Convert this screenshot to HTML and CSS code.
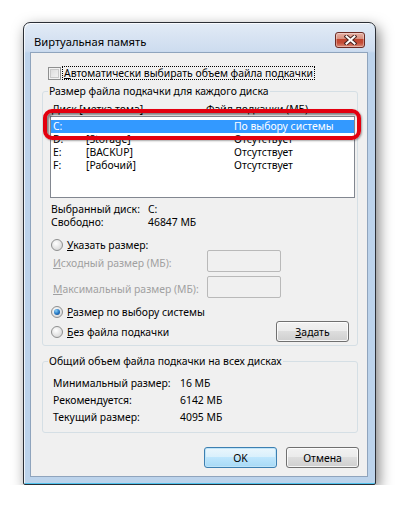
FILE: index.html
```html
<!DOCTYPE html>
<html lang="ru">
<head>
    <meta charset="UTF-8">
    <title>Виртуальная память</title>
    <link rel="stylesheet" href="styles.css">
</head>
<body>
    <div class="window">
        <div class="titlebar">
            <span class="title">Виртуальная память</span>
            <button class="close" title="Закрыть">
                <svg width="13" height="10" viewBox="0 0 13 10">
                    <path d="M2.5 1.5 L10.5 8.5 M10.5 1.5 L2.5 8.5" stroke="#4a2420" stroke-width="4" stroke-linecap="square"/>
                    <path d="M2.5 1.5 L10.5 8.5 M10.5 1.5 L2.5 8.5" stroke="#fff" stroke-width="2" stroke-linecap="square"/>
                </svg>
            </button>
        </div>

        <div class="client">
            <label class="auto">
                <span class="check"></span>
                <span class="focus"><u>А</u>втоматически выбирать объем файла подкачки</span>
            </label>

            <fieldset class="group">
                <legend>Размер файла подкачки для каждого диска</legend>
                <div class="cols">
                    <span>Диск [метка тома]</span>
                    <span>Файл подкачки (МБ)</span>
                </div>
                <div class="listbox">
                    <div class="row sel"><span>C:</span><span></span><span>По выбору системы</span></div>
                    <div class="row"><span>D:</span><span>[Storage]</span><span>Отсутствует</span></div>
                    <div class="row"><span>E:</span><span>[BACKUP]</span><span>Отсутствует</span></div>
                    <div class="row"><span>F:</span><span>[Рабочий]</span><span>Отсутствует</span></div>
                    <div class="callout"></div>
                </div>

                <div class="info">
                    <span>Выбранный диск:</span><span>C:</span>
                    <span>Свободно:</span><span>46847 МБ</span>
                </div>

                <div class="opt first"><span class="radio"></span><span><u>У</u>казать размер:</span></div>
                <div class="field f1">
                    <span class="muted"><u>И</u>сходный размер (МБ):</span>
                    <span class="input"></span>
                </div>
                <div class="field f2">
                    <span class="muted"><u>М</u>аксимальный размер (МБ):</span>
                    <span class="input"></span>
                </div>
                <div class="opt sys"><span class="radio on"></span><span><u>Р</u>азмер по выбору системы</span></div>
                <div class="opt last">
                    <span class="radio"></span><span><u>Б</u>ез файла подкачки</span>
                    <button class="btn set"><u>З</u>адать</button>
                </div>
            </fieldset>

            <fieldset class="group totals">
                <legend>Общий объем файла подкачки на всех дисках</legend>
                <div class="stats">
                    <span>Минимальный размер:</span><span>16 МБ</span>
                    <span>Рекомендуется:</span><span>6142 МБ</span>
                    <span>Текущий размер:</span><span>4095 МБ</span>
                </div>
            </fieldset>

            <div class="actions">
                <button class="btn default">OK</button>
                <button class="btn">Отмена</button>
            </div>
        </div>
    </div>
</body>
</html>
```

FILE: styles.css
```css
* {
    box-sizing: border-box;
}

body {
    margin: 0;
    background-color: #ffffff;
    font-family: "Noto Sans", "Open Sans", sans-serif;
    font-size: 10.4px;
    color: #000000;
    white-space: nowrap;
}

.window {
    width: 353px;
    height: 463px;
    margin: 22px 0 0 23px;
    padding: 0 7px 7px 6px;
    display: flex;
    flex-direction: column;
    border: 1px solid #2b2f36;
    border-radius: 7px 7px 2px 2px;
    background: linear-gradient(180deg, #e2ebf6 0, #cddcef 28px, #bdd3eb 30px, #bcd3eb 100%);
    box-shadow: inset 1px 1px 0 rgba(255,255,255,0.75), inset 0 -1px 0 #4fc3ee, 3px 5px 14px rgba(0,0,0,0.5);
}

.titlebar {
    height: 29px;
    display: flex;
    justify-content: space-between;
    align-items: flex-start;
}

.title {
    margin: 11px 0 0 4px;
    font-size: 11.2px;
    line-height: 15px;
}

.close {
    width: 30px;
    height: 16px;
    margin: 9px 3px 0 0;
    padding: 0;
    display: flex;
    align-items: center;
    justify-content: center;
    border: 1px solid #6b2a23;
    border-radius: 3px;
    background: linear-gradient(180deg, #e6b0a4 0, #d88f7e 42%, #c14630 46%, #c44c36 70%, #d98c79 100%);
    box-shadow: inset 0 0 0 1px rgba(255,255,255,0.35);
}

.client {
    flex: 1;
    display: flex;
    flex-direction: column;
    padding: 13px 9px 0 11px;
    background-color: #f0f0f0;
    border: 1px solid #8fa4bd;
}

.auto {
    display: flex;
    align-items: center;
    height: 14px;
    margin-left: 6px;
}

.check {
    width: 13px;
    height: 13px;
    border: 1px solid #8e8f8f;
    background: linear-gradient(135deg, #d8d8d8, #f7f7f7);
    box-shadow: inset 0 0 0 1px #f2f2f2, inset 0 0 0 2px #c9c9c9;
}

.focus {
    margin-left: 1px;
    padding: 0 1px;
    line-height: 12px;
    border: 1px dotted #000000;
}

.group {
    margin: 5px 0 0;
    padding: 0 2px 3px 7px;
    min-width: 0;
    border: 1px solid #d5dfe5;
    border-radius: 3px;
}

.group legend {
    margin-left: -2px;
    padding: 0 1px;
    line-height: 13px;
}

.cols {
    display: grid;
    grid-template-columns: 154px auto;
    padding: 5px 0 0 2px;
    line-height: 13px;
}

.listbox {
    position: relative;
    height: 82px;
    padding-top: 3px;
    border: 1px solid #828790;
    background-color: #ffffff;
}

.row {
    display: grid;
    grid-template-columns: 33px 148px auto;
    height: 13px;
    line-height: 13px;
    padding-left: 2px;
}

.row.sel {
    background-color: #3399ff;
    color: #ffffff;
}

/* red marker drawn over the first row */
.callout {
    position: absolute;
    left: -8px;
    top: -8px;
    width: 318px;
    height: 31px;
    border: 4px solid #e3000f;
    border-radius: 9px;
    box-shadow: inset 2px 2px 2px rgba(0,0,0,0.45), 1px 1px 2px rgba(0,0,0,0.35);
}

.info {
    display: grid;
    grid-template-columns: 97px auto;
    margin-top: 5px;
    padding-left: 1px;
    line-height: 13px;
}

.opt {
    display: flex;
    align-items: center;
    gap: 4px;
    height: 12px;
    padding-left: 1px;
}

.opt.first {
    margin-top: 10px;
}

.opt.sys {
    margin-top: 8px;
}

.opt.last {
    height: 21px;
    margin-top: 3px;
}

.radio {
    width: 12px;
    height: 12px;
    border: 1px solid #8e8f8f;
    border-radius: 50%;
    background: radial-gradient(circle at 40% 35%, #ffffff 0, #e6e6e6 50%, #cfcfcf 100%);
    display: flex;
    align-items: center;
    justify-content: center;
}

.radio.on::after {
    content: "";
    width: 6px;
    height: 6px;
    border-radius: 50%;
    background: radial-gradient(circle at 35% 30%, #8ad0f7 0, #2a7cc7 50%, #0c3e78 100%);
}

.field {
    display: grid;
    grid-template-columns: 157px 74px;
    align-items: center;
    height: 22px;
}

.field.f1 {
    margin-top: -1px;
}

.field.f2 {
    margin-top: 4px;
}

.muted {
    padding: 3px 0 0 3px;
    color: #a0a0a0;
}

.input {
    height: 22px;
    border: 1px solid #b9b9b9;
    border-radius: 2px;
    background-color: #f0f0f0;
}

.btn {
    width: 73px;
    height: 21px;
    padding: 0;
    font: inherit;
    color: #000000;
    border: 1px solid #707070;
    border-radius: 3px;
    background: linear-gradient(180deg, #f2f2f2 0, #ebebeb 48%, #dddddd 50%, #cfcfcf 100%);
    box-shadow: inset 0 0 0 1px rgba(255,255,255,0.8);
}

.btn.set {
    margin: 0 6px 0 auto;
}

.btn.default {
    border-color: #3c7fb1;
    background: linear-gradient(180deg, #eaf6fd 0, #d9f0fc 48%, #bee6fd 50%, #a7d9f5 100%);
    box-shadow: inset 0 0 0 1px #bfe4f8;
}

.totals {
    margin-top: 9px;
    padding-bottom: 7px;
}

.stats {
    display: grid;
    grid-template-columns: 127px auto;
    grid-auto-rows: 17px;
    align-items: center;
    padding: 6px 0 0 3px;
}

.actions {
    display: flex;
    justify-content: flex-end;
    gap: 9px;
    margin: 14px -1px 0 0;
}
```
